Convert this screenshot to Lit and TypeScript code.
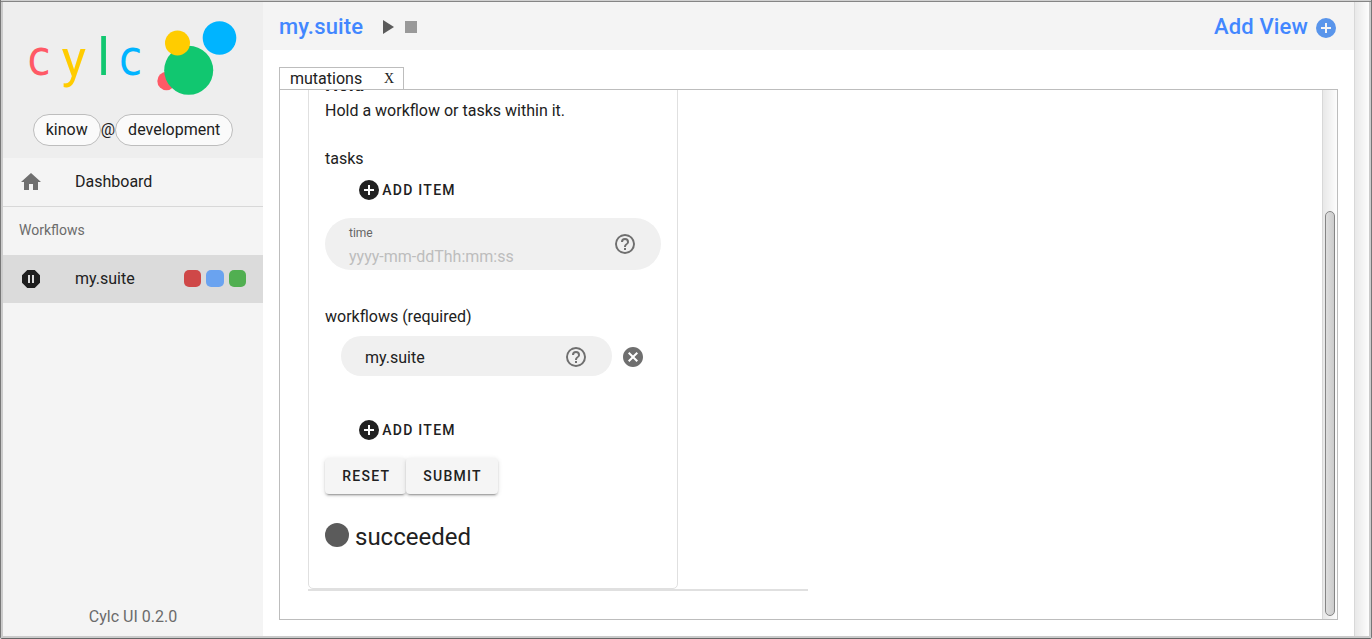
import { LitElement, html, css, svg } from "lit";
import { customElement } from "lit/decorators.js";

const paths = {
  home: "M10,20V14H14V20H19V12H22L12,3L2,12H5V20H10Z",
  pause: "M15.73,3H8.27L3,8.27V15.73L8.27,21H15.73L21,15.73V8.27L15.73,3M11,16H9V8H11V16M15,16H13V8H15V16Z",
  plus: "M17,13H13V17H11V13H7V11H11V7H13V11H17M12,2A10,10 0 0,0 2,12A10,10 0 0,0 12,22A10,10 0 0,0 22,12A10,10 0 0,0 12,2Z",
  help: "M11,18H13V16H11V18M12,2A10,10 0 0,0 2,12A10,10 0 0,0 12,22A10,10 0 0,0 22,12A10,10 0 0,0 12,2M12,20C7.59,20 4,16.41 4,12C4,7.59 7.59,4 12,4C16.41,4 20,7.59 20,12C20,16.41 16.41,20 12,20M12,6A4,4 0 0,0 8,10H10A2,2 0 0,1 12,8A2,2 0 0,1 14,10C14,12 11,11.75 11,15H13C13,12.75 16,12.5 16,10A4,4 0 0,0 12,6Z",
  close: "M12,2C17.53,2 22,6.47 22,12C22,17.53 17.53,22 12,22C6.47,22 2,17.53 2,12C2,6.47 6.47,2 12,2M15.59,7L12,10.59L8.41,7L7,8.41L10.59,12L7,15.59L8.41,17L12,13.41L15.59,17L17,15.59L13.41,12L17,8.41L15.59,7Z",
};

const icon = (name: keyof typeof paths) =>
  html`<svg class="icon" viewBox="0 0 24 24" width="24" height="24">${svg`<path fill="currentColor" d=${paths[name]} />`}</svg>`;

@customElement("cylc-sidebar")
class CylcSidebar extends LitElement {
  static styles = css`
    :host { display: flex; flex-direction: column; width: 260px; flex: none; background: #f4f4f4; color: #212121; }
    .icon, .logo { display: block; flex: none; }
    .head { height: 156px; background: #eee; }
    .logo text { font-family: Roboto, sans-serif; font-size: 52px; }
    .logo .c { font-family: "DejaVu Sans", sans-serif; font-size: 49px; }
    .user { display: flex; justify-content: center; align-items: center; height: 32px; line-height: 32px; }
    .chip { box-sizing: border-box; height: 32px; border: 1px solid #bdbdbd; border-radius: 16px; background: #fafafa; padding: 0 12px; line-height: 29px; }
    .row { display: flex; align-items: center; height: 48px; box-sizing: border-box; padding: 0 17px 0 16px; }
    .row .icon { margin-right: 32px; color: #6f6f6f; }
    .row > span { line-height: 20px; }
    .home { border-bottom: 1px solid #d8d8d8; height: 49px; }
    .sub { font-size: 14px; color: #6b6b6b; padding-bottom: 2px; }
    .active { background: #dbdbdb; }
    .active .icon { color: #1e1e1e; }
    .name { flex: 1; }
    .row > .squares { display: flex; gap: 5px; padding-bottom: 1px; }
    .sq { width: 17.5px; height: 17.5px; border-radius: 5px; }
    .red { background: #cf4848; } .blue { background: #6aa3f0; } .green { background: #51af51; }
    .foot { margin-top: auto; text-align: center; color: #6b6b6b; line-height: 24px; padding-bottom: 7px; }
  `;
  render() {
    return html`
      <div class="head">
        <svg class="logo" width="260" height="112" viewBox="3 2 260 112">
          <text class="c" transform="translate(27.400 75.300) scale(.86 1.020)" fill="#ff5966">c</text>
          <text transform="translate(61.600 75.800) scale(1 1)" fill="#ffcc00">y</text>
          <text transform="translate(97.200 75.300) scale(1 1)" fill="#11c770">l</text>
          <text class="c" transform="translate(119 75.300) scale(.86 1.020)" fill="#00b4ff">c</text>
          <circle cx="166.500" cy="81" r="9.200" fill="#ff5966" />
          <circle cx="188.700" cy="70.300" r="24.500" fill="#11c770" />
          <circle cx="177.500" cy="43" r="12.500" fill="#ffcc00" />
          <circle cx="219.500" cy="38" r="16.800" fill="#00b4ff" />
        </svg>
        <div class="user"><span class="chip">kinow</span><span>@</span><span class="chip">development</span></div>
      </div>
      <div class="row home">${icon("home")}<span>Dashboard</span></div>
      <div class="row sub">Workflows</div>
      <div class="row active">${icon("pause")}<span class="name">my.suite</span>
        <span class="squares"><i class="sq red"></i><i class="sq blue"></i><i class="sq green"></i></span>
      </div>
      <div class="foot">Cylc UI 0.2.0</div>
    `;
  }
}

@customElement("cylc-mutation")
class CylcMutation extends LitElement {
  static styles = css`
    :host { display: block; box-sizing: border-box; width: 500px; height: 541px; border-bottom: 2px solid #e0e0e0; flex: none; }
    .icon { display: block; flex: none; }
    .card { box-sizing: border-box; width: 370px; height: 539px; border: 1px solid #e0e0e0; border-radius: 5px; padding: 22px 16px 0; display: flex; flex-direction: column; align-items: flex-start; color: #212121; line-height: 24px; }
    .title { font-weight: 700; font-size: 18.72px; margin-bottom: 2px; }
    .label { margin-top: 24px; }
    .add { display: flex; align-items: center; margin-left: 32px; height: 36px; font-size: 14px; font-weight: 500; letter-spacing: 1.25px; gap: 1.3px; }
    .first { margin-top: 1px; }
    .field { display: flex; align-items: center; box-sizing: border-box; background: #f0f0f0; border-radius: 28px; padding: 0 24px; }
    .time { width: 336px; height: 52px; margin-top: 10px; }
    .stack { flex: 1; display: flex; flex-direction: column; }
    .hint { font-size: 12px; line-height: 20px; color: #666; padding-top: 3px; }
    .ph { color: #bdbdbd; line-height: 24px; padding-top: 2px; }
    .field .icon, .remove .icon { color: #6f6f6f; }
    .wf { margin-top: 35px; }
    .line { display: flex; align-items: center; margin: 7px 0 0 16px; gap: 9px; }
    .value { width: 271px; height: 40px; border-radius: 20px; }
    .value span { flex: 1; padding-top: 3px; }
    .value .icon, .remove .icon { margin-top: 2px; }
    .second { margin-top: 36px; }
    .buttons { display: flex; margin-top: 10px; }
    .btn { box-sizing: border-box; height: 36px; padding: 0 15.7px 0 17.3px; border-radius: 4px; background: #f5f5f5; font-size: 14px; font-weight: 500; letter-spacing: 1.25px; line-height: 36px; box-shadow: 0 3px 1px -2px #0003, 0 2px 2px #00000024, 0 1px 5px #0000001f; }
    .status { display: flex; align-items: center; gap: 6px; margin-top: 25px; font-size: 24px; line-height: 36px; }
    .dot { width: 24px; height: 24px; border-radius: 50%; background: #5b5b5b; margin-bottom: 4px; }
  `;
  render() {
    return html`
      <div class="card">
        <div class="title">Hold</div>
        <div>Hold a workflow or tasks within it.</div>
        <div class="label">tasks</div>
        <div class="add first">${icon("plus")}<span>ADD ITEM</span></div>
        <div class="field time">
          <div class="stack"><span class="hint">time</span><span class="ph">yyyy-mm-ddThh:mm:ss</span></div>
          ${icon("help")}
        </div>
        <div class="label wf">workflows (required)</div>
        <div class="line">
          <div class="field value"><span>my.suite</span>${icon("help")}</div>
          <div class="remove">${icon("close")}</div>
        </div>
        <div class="add second">${icon("plus")}<span>ADD ITEM</span></div>
        <div class="buttons"><div class="btn">RESET</div><div class="btn">SUBMIT</div></div>
        <div class="status"><i class="dot"></i><span>succeeded</span></div>
      </div>
    `;
  }
}

@customElement("app-root")
class AppRoot extends LitElement {
  static styles = css`
    :host { display: flex; flex-direction: column; box-sizing: border-box; width: 1372px; height: 639px; overflow: hidden; background: #fff; font-family: Roboto, sans-serif; font-size: 16px; border-left: 1px solid #777; border-right: 1px solid #777; border-bottom: 1px solid #666; border-radius: 0 0 2px 2px; }
    .edge { height: 1px; background: #d0d0d0; border-bottom: 1px solid #858585; flex: none; }
    .frame { flex: 1; display: flex; min-height: 0; border: solid #cbcbcb; border-width: 0 2px 2px; }
    .main { flex: 1; min-width: 0; display: flex; flex-direction: column; }
    .bar { display: flex; align-items: center; height: 48px; box-sizing: border-box; background: #f4f4f4; padding: 0 16px; color: #4287ff; font-size: 22px; font-weight: 500; letter-spacing: .16px; flex: none; }
    .icon { display: block; flex: none; }
    .play { margin: 2px 0 0 20px; }
    .addview { margin-left: auto; display: flex; align-items: center; gap: 6px; }
    .addview .icon { color: #5995eb; margin-top: 3px; }
    .body { flex: 1; min-height: 0; display: flex; flex-direction: column; align-items: flex-start; padding: 17px 16px 16px; }
    .tab { display: flex; box-sizing: border-box; width: 125px; height: 22px; border: 1px solid #bdbdbd; border-bottom: 0; padding: 0 9px 0 10px; justify-content: space-between; line-height: 22px; color: #212121; flex: none; }
    .x { font: 14px/21px "Liberation Serif", "DejaVu Serif", serif; }
    .panel { flex: 1; min-height: 0; align-self: stretch; display: flex; border: 1px solid #bdbdbd; }
    .view { flex: 1; overflow: hidden; display: flex; align-items: flex-end; padding: 0 0 28px 28px; }
    .track { box-sizing: border-box; width: 15px; border-left: 1px solid #d8d8d8; background: linear-gradient(90deg, #e8e8e8, #fdfdfd); flex: none; }
    .inner { padding: 121px 2px 3px; display: flex; }
    .thumb { flex: 1; border: 1px solid #858585; border-radius: 5px; background: linear-gradient(90deg, #dedede, #cccccc); }
  `;
  render() {
    return html`
      <div class="edge"></div>
      <div class="frame">
        <cylc-sidebar></cylc-sidebar>
        <div class="main">
          <div class="bar">
            <span>my.suite</span>
            <svg class="play" width="36" height="16" viewBox="0 0 36 16"><path d="M0 1V15L11 8Z" fill="#5b5b5b" /><rect x="22" y="2" width="12" height="12" fill="#999" /></svg>
            <span class="addview">Add View${icon("plus")}</span>
          </div>
          <div class="body">
            <div class="tab"><span>mutations</span><span class="x">X</span></div>
            <div class="panel">
              <div class="view"><cylc-mutation></cylc-mutation></div>
              <div class="track inner"><div class="thumb"></div></div>
            </div>
          </div>
        </div>
        <div class="track"></div>
      </div>
    `;
  }
}
